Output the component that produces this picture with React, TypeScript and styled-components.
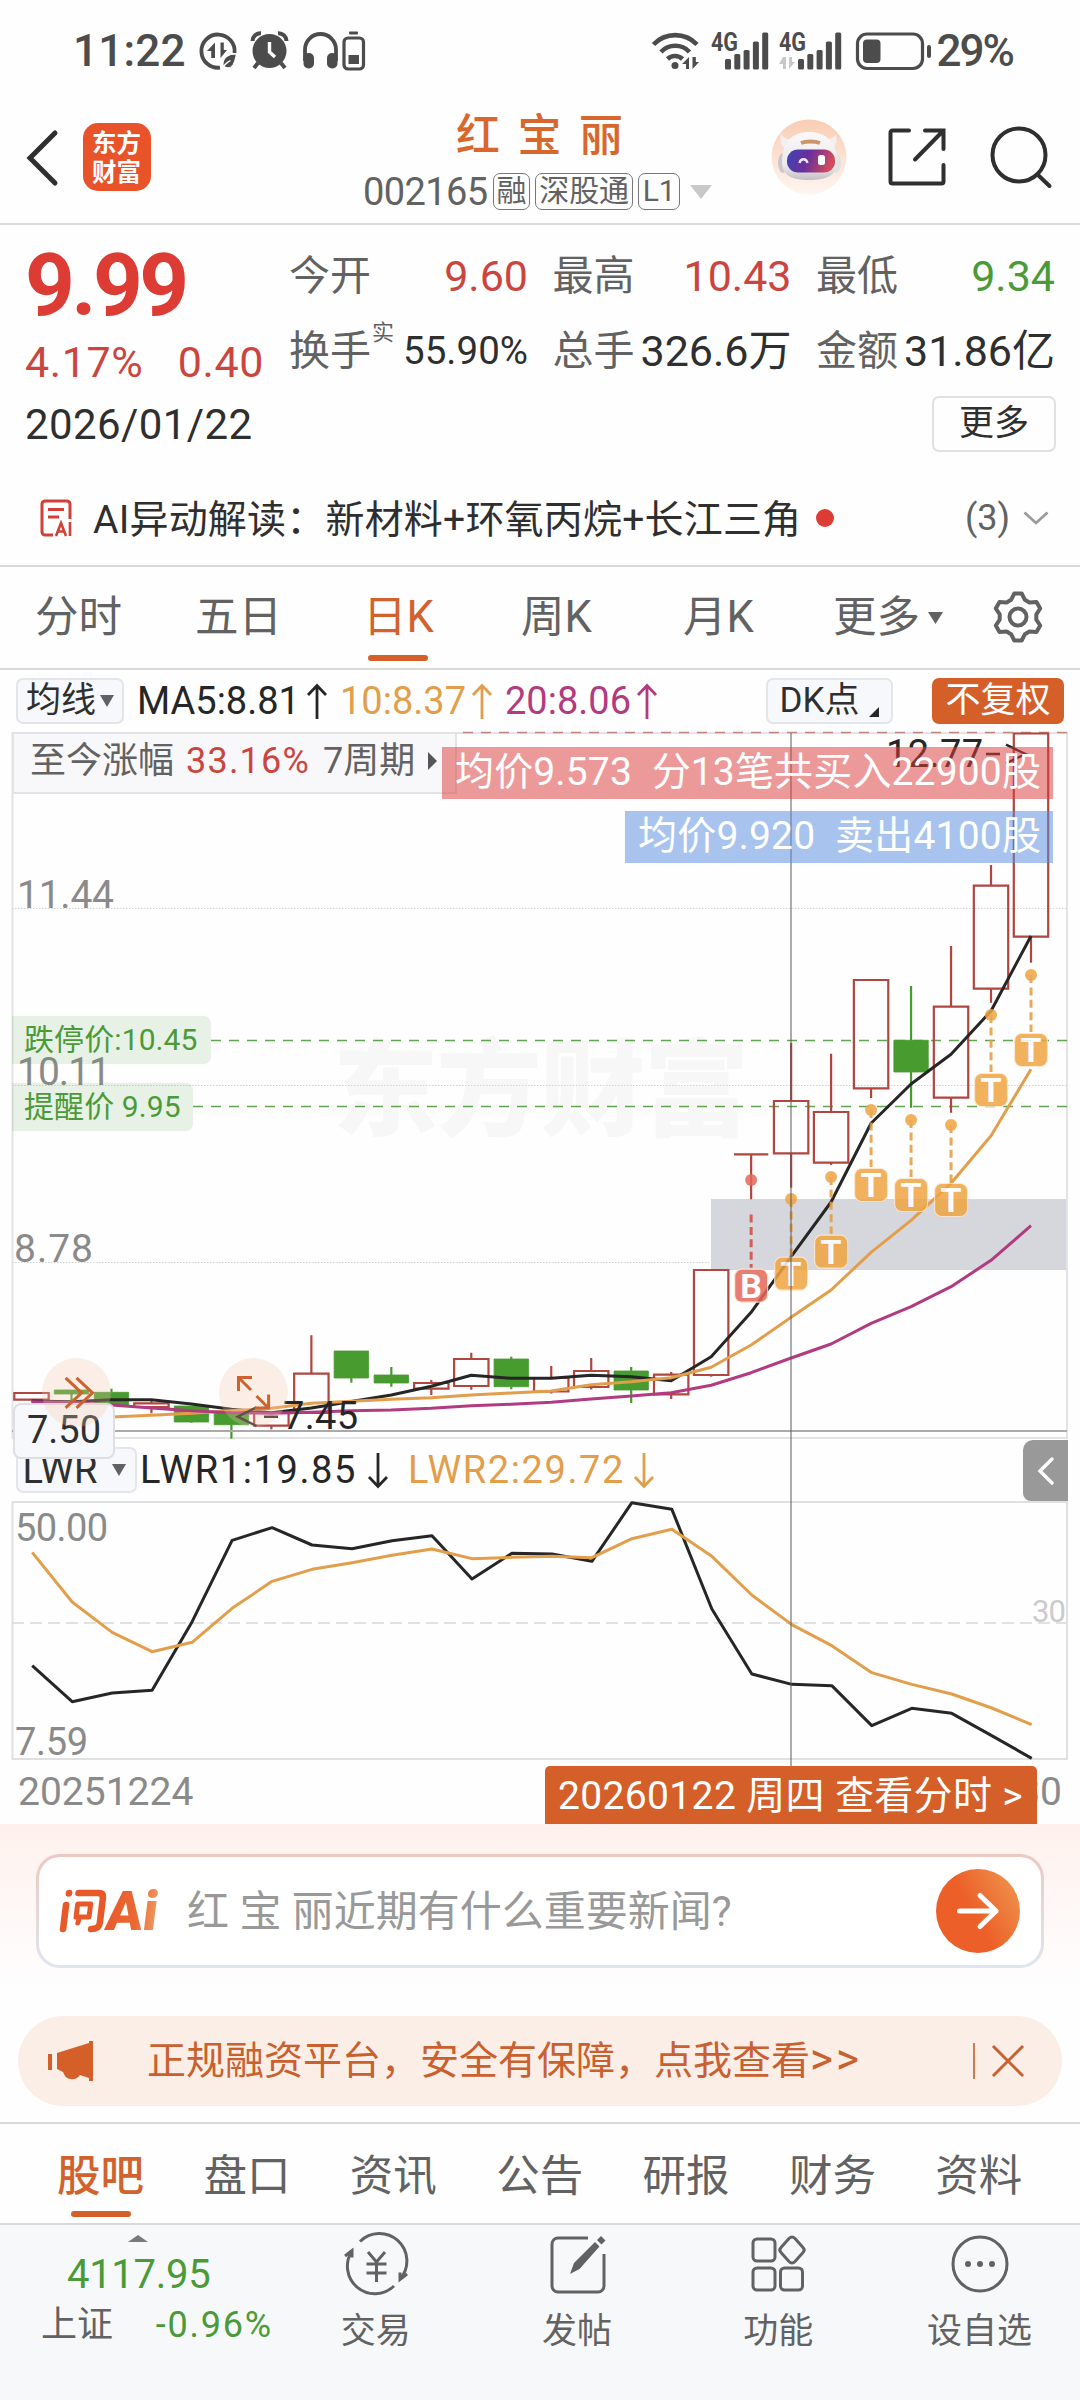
import React from 'react';
import styled, { createGlobalStyle } from 'styled-components';

const FONT = 'Roboto, "Noto Sans CJK SC", sans-serif';

const color = {
  orange: '#d55f29',
  red: '#cb453e',
  green: '#4b9a38',
  text: '#2f2f2f',
  sub: '#626262',
  axis: '#8a8a8a',
  line: '#d9d9d9',
  ma10: '#e39e4b',
  ma20: '#b23a80',
  status: '#4c4c4c'
};

const GlobalStyle = createGlobalStyle`
  * {
    box-sizing: border-box;
  }

  body {
    margin: 0;
    background: #fefefe;
    font-family: ${FONT};
    color: ${color.text};
  }
`;

const Page = styled.div`
  width: 1080px;
  height: 2400px;
  overflow: hidden;
  white-space: pre;
`;

const Icon = styled.svg<{ $left?: number; $top?: number; $flip?: boolean }>`
  display: block;
  flex: none;
  margin-left: ${p => p.$left || 0}px;
  margin-top: ${p => p.$top || 0}px;
  overflow: visible;
  transform: ${p => (p.$flip ? 'rotate(180deg)' : 'none')};
`;

const Grow = styled.div`
  flex: 1;
`;

/* ---------- status bar ---------- */

const StatusBar = styled.div`
  display: flex;
  align-items: center;
  height: 102px;
  padding: 0 67px 0 73px;
  color: ${color.status};
`;

const StatusText = styled.span<{ $ls?: number; $left?: number }>`
  margin-left: ${p => p.$left || 0}px;
  font-size: 44px;
  font-weight: 500;
  line-height: 50px;
  letter-spacing: ${p => p.$ls || 0}px;
`;

const StatusGroup = styled.div<{ $gap: number }>`
  display: flex;
  align-items: center;
  gap: ${p => p.$gap}px;
`;

const Signal = ({ arrows }: { arrows?: boolean }) => (
  <Icon width='58' height='38' viewBox='0 0 58 38'>
    <text x='0' y='19' fontSize='26' fontWeight='700' fill={color.status} textLength='27' lengthAdjust='spacingAndGlyphs'>4G</text>
    {[[14, 27], [23.3, 22], [32.6, 18], [41.9, 9.5], [51.2, 0.5]].map(([x, y]) => (
      <rect key={x} x={x + (arrows ? 5 : 0)} y={y} width='6' height={37.5 - y} rx='1.5' fill={color.status} />
    ))}
    {arrows && <path d='M4 25v12h3V25zM0 32l4-7v7zM10 25v12l6-7h-3v-5z' fill='#c8c8c8' />}
  </Icon>
);

const Status = () => (
  <StatusBar>
    <StatusText $ls={0.2}>11:22</StatusText>
    <StatusGroup $gap={14.5}>
      <Icon $left={13} width='38' height='38' viewBox='0 0 38 38'>
        <path d='M35.5 21A16.6 16.6 0 1 0 21 35.6' fill='none' stroke={color.status} strokeWidth='3.8' />
        <path d='M16 10.5V26h-3.8v-7H8zM21.5 10.5V26l6.500-8h-3.200v-7.500z' fill={color.status} />
        <path d='M37.5 22c-8 0-14 3-13.500 11.500 3 3.500 7.500 3 10-.5 2-3 2.500-6.500 3.500-11zM23.5 36c2-4 5-6 8-7.500' fill={color.status} stroke='#fefefe' strokeWidth='1.2' />
      </Icon>
      <Icon width='37' height='38' viewBox='0 0 37 38'>
        <path d='M1.5 9A8 8 0 0 1 10 1.2M35.5 9A8 8 0 0 0 27 1.2' fill='none' stroke={color.status} strokeWidth='4' />
        <path d='M7 31l-4 5M30 31l4 5' stroke={color.status} strokeWidth='4' />
        <circle cx='18.5' cy='19' r='17' fill={color.status} />
        <path d='M18.5 10v10l5.500 5' fill='none' stroke='#fefefe' strokeWidth='3.4' />
      </Icon>
      <Icon width='35' height='38' viewBox='0 0 35 38'>
        <path d='M2 29V17.500a15.500 15.500 0 0 1 31 0V29' fill='none' stroke={color.status} strokeWidth='3.8' />
        <rect x='0.5' y='21' width='10.5' height='15.5' rx='5' fill={color.status} />
        <rect x='24' y='21' width='10.5' height='15.5' rx='5' fill={color.status} />
      </Icon>
      <Icon $left={-10} width='23' height='40' viewBox='0 0 23 40'>
        <rect x='7' y='0.5' width='9' height='3' rx='1' fill={color.status} />
        <rect x='2' y='7' width='19.5' height='31' rx='4' fill='none' stroke={color.status} strokeWidth='3.2' />
        <rect x='6.5' y='24' width='10.5' height='9' fill={color.status} />
      </Icon>
    </StatusGroup>
    <Grow />
    <StatusGroup $gap={10.5}>
      <Icon width='48' height='38' viewBox='0 0 48 38'>
        <g fill='none' stroke={color.status} strokeWidth='4.6'>
          <path d='M1.5 12.500a30 30 0 0 1 43.500 0' />
          <path d='M9 20a19.500 19.500 0 0 1 28.500 0' />
          <path d='M15.5 27a11 11 0 0 1 15 0' />
        </g>
        <circle cx='23' cy='33.5' r='3.5' fill={color.status} />
        <path d='M37 25v12h-3v-5h-4zM40.5 25v12l6.500-7h-3.200v-5z' fill={color.status} />
      </Icon>
      <Signal />
      <Signal arrows />
      <Icon $left={8} width='76' height='38' viewBox='0 0 76 38'>
        <rect x='1.5' y='2' width='65' height='34.5' rx='9.5' fill='none' stroke={color.status} strokeWidth='3.2' />
        <rect x='7' y='7.5' width='17.5' height='23.5' rx='4' fill={color.status} />
        <rect x='71' y='13' width='4' height='13' rx='2' fill={color.status} />
      </Icon>
    </StatusGroup>
    <StatusText $left={5} $ls={-2}>29%</StatusText>
  </StatusBar>
);

/* ---------- header ---------- */

const HeaderBar = styled.div`
  display: flex;
  align-items: center;
  height: 123px;
  padding: 0 28px 0 26px;
  border-bottom: 2px solid ${color.line};
`;

const Lifted = styled.div`
  display: flex;
  align-items: center;
  height: 76px;
  margin-top: -12px;
`;

const Logo = styled.div`
  width: 68px;
  height: 68px;
  margin-left: 24px;
  padding: 4px 9px;
  border-radius: 15px;
  background: #e9532a;
  color: #fff;
  font-family: "Noto Sans CJK SC", sans-serif;
  font-size: 24.5px;
  font-weight: 700;
  line-height: 29px;
  white-space: pre-line;
`;

const TitleBlock = styled.div`
  flex: 1;
  margin-top: -2px;
  padding-left: 212px;
`;

const Title = styled.div`
  padding-left: 93px;
  font-size: 44px;
  line-height: 54px;
  font-weight: 500;
  letter-spacing: 3.3px;
  color: #d8672e;
`;

const CodeLine = styled.div`
  display: flex;
  align-items: center;
  height: 46px;
  margin-top: 6px;
  color: ${color.sub};
  font-size: 38px;
  line-height: 38px;
  letter-spacing: -0.6px;
`;

const CodeTag = styled.span<{ $pad?: number }>`
  height: 37px;
  margin-left: 5px;
  padding: 0 ${p => p.$pad || 3}px;
  border: 1.5px solid #777;
  border-radius: 7px;
  font-size: 30px;
  line-height: 34px;
  letter-spacing: -0.2px;
`;

const Header = () => (
  <HeaderBar>
    <Lifted>
      <Icon $top={2} width='33' height='56' viewBox='0 0 33 56'>
        <path d='M29 3L4 28l25 25' fill='none' stroke={color.text} strokeWidth='5' strokeLinecap='round' />
      </Icon>
      <Logo>{'东方\n财富'}</Logo>
    </Lifted>
    <TitleBlock>
      <Title>红 宝 丽</Title>
      <CodeLine>
        002165
        <CodeTag>融</CodeTag>
        <CodeTag>深股通</CodeTag>
        <CodeTag $pad={4}>L1</CodeTag>
        <Icon $left={10} width='22' height='14' viewBox='0 0 22 14'>
          <path d='M0 0h22L11 14z' fill='#c9c9c9' />
        </Icon>
      </CodeLine>
    </TitleBlock>
    <Lifted>
      <Icon width='76' height='76' viewBox='0 0 76 76'>
        <defs>
          <linearGradient id='halo' x1='0' y1='0' x2='0' y2='1'>
            <stop offset='0' stopColor='#f9cdb3' />
            <stop offset='1' stopColor='#fef6f2' />
          </linearGradient>
          <linearGradient id='shell' x1='0' y1='0' x2='0' y2='1'>
            <stop offset='0' stopColor='#fbf8f8' />
            <stop offset='0.7' stopColor='#ece9ec' />
            <stop offset='1' stopColor='#c3bfc5' />
          </linearGradient>
          <linearGradient id='visor' x1='0' y1='0' x2='1' y2='0.2'>
            <stop offset='0' stopColor='#3d45b4' />
            <stop offset='0.5' stopColor='#6c2f9b' />
            <stop offset='1' stopColor='#d24a5c' />
          </linearGradient>
        </defs>
        <circle cx='38' cy='38' r='37.5' fill='url(#halo)' />
        <path d='M10 15c-2 8 1 13 5 16l8-11c-6 1-11-1-13-5zM65 15c2 8-1 13-5 16l-8-11c6 1 11-1 13-5z' fill='#f3eeef' />
        <ellipse cx='12' cy='44' rx='5' ry='10' fill='#cbc7cc' />
        <ellipse cx='65' cy='44' rx='5' ry='10' fill='#e4dfe2' />
        <path d='M11 43c0-20 10-30 27-30s28 10 28 30c0 13-10 18-28 18S11 56 11 43z' fill='url(#shell)' />
        <path d='M30 24c5-2 14-2 19 0' stroke='#c9956a' strokeWidth='4' fill='none' />
        <rect x='16' y='30.5' width='48' height='23' rx='11' fill='url(#visor)' />
        <path d='M28.5 44c1-5 7-5 8 0' stroke='#e9e6ff' strokeWidth='2.4' fill='none' />
        <rect x='47' y='36' width='7' height='10' rx='2.5' fill='#fff' />
      </Icon>
      <Icon $left={41} width='58' height='58' viewBox='0 0 58 58' fill='none' stroke={color.text} strokeWidth='4' strokeLinecap='round'>
        <path d='M21 2.500H4.500a2 2 0 0 0-2 2v49a2 2 0 0 0 2 2h49a2 2 0 0 0 2-2V37' />
        <path d='M37 2.500h18.500V21M54 4L27 31.500' />
      </Icon>
      <Icon $left={44} width='62' height='60' viewBox='0 0 62 60' fill='none' stroke={color.text} strokeWidth='4' strokeLinecap='round'>
        <circle cx='29' cy='28' r='26.5' />
        <path d='M47.5 47.500l12 11.500' />
      </Icon>
    </Lifted>
  </HeaderBar>
);

/* ---------- quote ---------- */

const QuoteGrid = styled.div`
  display: grid;
  grid-template-columns: 264px 1fr;
  padding: 24px 24px 0 25px;
`;

const Price = styled.div`
  font-size: 87px;
  line-height: 73px;
  font-weight: 700;
  letter-spacing: -3.6px;
  color: #dc3c34;
`;

const Change = styled.div`
  display: flex;
  justify-content: space-between;
  width: 239px;
  margin-top: 15px;
  font-size: 43px;
  line-height: 50px;
  letter-spacing: 0.6px;
  color: ${color.red};
`;

const Stats = styled.div`
  display: grid;
  grid-template-columns: 239px 239px 239px;
  align-content: start;
  column-gap: 24.5px;
  row-gap: 25px;
  padding-top: 2px;
`;

const Stat = styled.div`
  display: flex;
  justify-content: space-between;
  height: 50px;
  line-height: 50px;
`;

const StatLabel = styled.span`
  display: flex;
  font-size: 41px;
  color: ${color.sub};
`;

const StatNote = styled.span`
  margin-left: 1px;
  font-size: 22px;
  line-height: 14px;
`;

const StatValue = styled.span<{ $color?: string; $small?: boolean }>`
  font-size: ${p => (p.$small ? 38.5 : 43)}px;
  color: ${p => p.$color || color.text};
`;

const DateRow = styled.div`
  display: flex;
  align-items: center;
  justify-content: space-between;
  height: 56px;
  margin-top: 9px;
  padding: 0 24px 0 25px;
  font-size: 42px;
  letter-spacing: 0.4px;
`;

const MoreButton = styled.div`
  width: 124px;
  height: 56px;
  border: 2px solid #e1e1e1;
  border-radius: 7px;
  font-size: 35px;
  line-height: 52px;
  letter-spacing: 0;
  text-align: center;
`;

const AiRow = styled.div`
  display: flex;
  align-items: center;
  height: 91px;
  margin-top: 20px;
  margin-bottom: 2px;
  padding: 0 31px 0 40px;
  font-size: 39px;
`;

const AiText = styled.span`
  margin-left: 21px;
  margin-top: -4px;
  letter-spacing: 0.2px;
`;

const RedDot = styled.i`
  width: 18px;
  height: 18px;
  margin-left: 15px;
  border-radius: 50%;
  background: #dc3c34;
`;

const AiCount = styled.span`
  margin-right: 13px;
  font-size: 36px;
  color: ${color.sub};
`;

const Quote = () => (
  <>
    <QuoteGrid>
      <div>
        <Price>9.99</Price>
        <Change>
          <span>4.17%</span>
          <span>0.40</span>
        </Change>
      </div>
      <Stats>
        <Stat><StatLabel>今开</StatLabel><StatValue $color={color.red}>9.60</StatValue></Stat>
        <Stat><StatLabel>最高</StatLabel><StatValue $color={color.red}>10.43</StatValue></Stat>
        <Stat><StatLabel>最低</StatLabel><StatValue $color={color.green}>9.34</StatValue></Stat>
        <Stat><StatLabel>换手<StatNote>实</StatNote></StatLabel><StatValue $small>55.90%</StatValue></Stat>
        <Stat><StatLabel>总手</StatLabel><StatValue>326.6万</StatValue></Stat>
        <Stat><StatLabel>金额</StatLabel><StatValue>31.86亿</StatValue></Stat>
      </Stats>
    </QuoteGrid>
    <DateRow>
      2026/01/22
      <MoreButton>更多</MoreButton>
    </DateRow>
    <AiRow>
      <Icon width='32' height='38' viewBox='0 0 32 38' fill='none' stroke='#cf4038' strokeWidth='3'>
        <path d='M13 36H5a3 3 0 0 1-3-3V5a3 3 0 0 1 3-3h22a3 3 0 0 1 3 3v15' />
        <path d='M8 10.500h16M8 18h11' />
        <path d='M16 37l5-13 5 13M18 32.500h6M30 23v14' strokeWidth='2.6' />
      </Icon>
      <AiText>AI异动解读：新材料+环氧丙烷+长江三角</AiText>
      <RedDot />
      <Grow />
      <AiCount>(3)</AiCount>
      <Icon width='26' height='14' viewBox='0 0 26 14'>
        <path d='M1.5 1.500L13 12 24.500 1.500' fill='none' stroke='#999' strokeWidth='2.6' />
      </Icon>
    </AiRow>
  </>
);

/* ---------- period tabs ---------- */

const PeriodBar = styled.div`
  display: grid;
  grid-template-columns: 160px 172px 154px 162px 150px 160px 1fr;
  align-items: center;
  height: 105px;
  padding-left: 35px;
  border-top: 2px solid ${color.line};
  border-bottom: 2px solid ${color.line};
`;

const Period = styled.div<{ $active?: boolean }>`
  position: relative;
  display: flex;
  align-items: center;
  font-size: 43.5px;
  line-height: 52px;
  text-indent: ${p => (p.$active ? -4 : 0)}px;
  color: ${p => (p.$active ? '#d2622d' : color.sub)};

  &::after {
    content: '';
    display: ${p => (p.$active ? 'block' : 'none')};
    position: absolute;
    left: 1px;
    bottom: -17px;
    width: 60px;
    height: 6px;
    border-radius: 3px;
    background: ${color.orange};
  }
`;

const Caret = ({ w = 14, h = 12, left = 0 }) => (
  <Icon $left={left} width={w} height={h} viewBox='0 0 14 12' preserveAspectRatio='none'>
    <path d='M0 0h14L7 12z' fill={color.sub} />
  </Icon>
);

const gearPath = () => {
  const pts: string[] = [];
  for (let i = 0; i < 6; i++) {
    const a = i * 60 - 90;
    [[-22, 18.5], [-9, 23.8], [9, 23.8], [22, 18.5]].forEach(([d, r]) => {
      const t = ((a + d) * Math.PI) / 180;
      pts.push(`${(26 + r * Math.cos(t)).toFixed(1)} ${(26 + r * Math.sin(t)).toFixed(1)}`);
    });
  }
  return `M${pts.join('L')}Z`;
};

const Periods = () => (
  <PeriodBar>
    <Period>分时</Period>
    <Period>五日</Period>
    <Period $active>日K</Period>
    <Period>周K</Period>
    <Period>月K</Period>
    <Period>更多<Caret w={15} left={8} /></Period>
    <Icon $left={-1} $top={-2} width='52' height='52' viewBox='0 0 52 52' fill='none' stroke={color.sub} strokeWidth='4' strokeLinejoin='round'>
      <path d={gearPath()} />
      <circle cx='26' cy='26' r='8.5' />
    </Icon>
  </PeriodBar>
);

/* ---------- indicator rows ---------- */

const IndicatorBar = styled.div<{ $h: number; $ls?: number }>`
  display: flex;
  align-items: center;
  height: ${p => p.$h}px;
  padding: 0 16px 0 16px;
  font-size: 38px;
  line-height: 44px;
  letter-spacing: ${p => p.$ls || 0}px;
`;

const Pill = styled.div<{ $w: number; $left?: number; $solid?: boolean }>`
  display: flex;
  align-items: center;
  justify-content: center;
  width: ${p => p.$w}px;
  height: 46px;
  margin-left: ${p => p.$left || 0}px;
  border: 2px solid ${p => (p.$solid ? color.orange : '#e3e5e9')};
  border-radius: 7px;
  background: ${p => (p.$solid ? color.orange : '#f7f8fb')};
  color: ${p => (p.$solid ? '#fff' : color.text)};
  font-size: 35px;
  line-height: 40px;
  letter-spacing: 0;
`;

const PillName = styled.span`
  margin: 0 15px 0 -4px;
  font-size: 38px;
`;

const Reading = styled.span<{ $color?: string; $left: number; $w: number }>`
  width: ${p => p.$w}px;
  margin-left: ${p => p.$left}px;
  color: ${p => p.$color || '#262626'};
`;

const Arrow = ({ c = '#262626', down = false }) => (
  <Icon $flip={down} width='20' height='35' viewBox='0 0 20 35'>
    <path d='M10 35V2M1 11l9-9.500 9 9.500' fill='none' stroke={c} strokeWidth='2.8' />
  </Icon>
);

/* ---------- chart ---------- */

// [body top, body bottom, high, low, rising]
type Candle = [number, number, number, number, boolean];

const candles: Candle[] = [
  [1393, 1399.7, 1393, 1399.7, true],
  [1390, 1394, 1390, 1400, false],
  [1392.3, 1405.3, 1388.7, 1405.3, false],
  [1403.3, 1407, 1400.7, 1413.3, true],
  [1406, 1422, 1406, 1422.7, false],
  [1413, 1424.7, 1413, 1438.7, false],
  [1413, 1425.7, 1413, 1429.3, true],
  [1373.7, 1413, 1335.3, 1414, true],
  [1351, 1378, 1351, 1382.7, false],
  [1375, 1383, 1367, 1386.7, false],
  [1383, 1388.7, 1380, 1395, true],
  [1359, 1386, 1352.7, 1389.7, true],
  [1359, 1386.7, 1356.7, 1389.3, false],
  [1378, 1391.5, 1366, 1393.5, true],
  [1371, 1387, 1358, 1389.5, true],
  [1371, 1390, 1367, 1403, false],
  [1374.7, 1394.3, 1372, 1399, true],
  [1270, 1375, 1270, 1376.7, true],
  [1154.3, 1154.3, 1154.3, 1199.3, true],
  [1101, 1153.3, 1043, 1187.7, true],
  [1112, 1162.7, 1053.7, 1165, true],
  [980, 1088.3, 980, 1098, true],
  [1040.3, 1072, 986, 1107.7, false],
  [1006.7, 1097.7, 946, 1112.7, true],
  [885.7, 988.7, 865, 1002.7, true],
  [733.5, 936.7, 733.5, 962.7, true]
];

const ma5 = [1401, 1401.7, 1399.7, 1399.7, 1404, 1409.3, 1412.7, 1408, 1401.5, 1395, 1386.3, 1375.3, 1378.3, 1378.3, 1375.3, 1376.7, 1380.7, 1356.7, 1312.3, 1256.7, 1202, 1123.3, 1084, 1054.3, 1011, 936];
const ma10 = [1419, 1418, 1417, 1415.3, 1413.3, 1410.7, 1408.3, 1403.3, 1401.3, 1399.3, 1397.7, 1395, 1393, 1391, 1384.7, 1381.7, 1377.7, 1367.3, 1345, 1317.3, 1290, 1252.3, 1220.3, 1183.3, 1135.7, 1069.3];
const ma20 = [1401.7, 1402.5, 1405, 1408, 1410.7, 1412.7, 1413.3, 1412.3, 1410.7, 1410, 1408.3, 1405.7, 1404.3, 1402.3, 1399, 1396, 1392.7, 1385.3, 1372.7, 1358, 1344, 1323.3, 1306.7, 1286.7, 1260.3, 1225.7];

const lwr1 = [737, 845, 819, 811, 605, 361, 323, 375, 386, 362, 347, 477, 400, 402, 424, 248, 268, 567, 762, 793, 797, 917, 865, 880, 947, 1015];
const lwr2 = [397, 546, 637, 695, 667, 565, 484, 448, 428, 406, 387, 416, 412, 409, 413, 356, 328, 409, 525, 614, 677, 758, 793, 822, 864, 914];

const marks = [
  { i: 18, dot: 1180, y: 1285.7, label: 'B' },
  { i: 19, dot: 1199, y: 1273.7, label: 'T' },
  { i: 20, dot: 1177, y: 1251.7, label: 'T' },
  { i: 21, dot: 1110, y: 1185, label: 'T' },
  { i: 22, dot: 1120, y: 1195, label: 'T' },
  { i: 23, dot: 1125, y: 1200, label: 'T' },
  { i: 24, dot: 1015, y: 1090, label: 'T' },
  { i: 25, dot: 975, y: 1050, label: 'T' }
];

const xAt = (i: number) => 31.5 + i * 39.98;
const points = (ys: number[]) => ys.map((y, i) => `${xAt(i)},${y}`).join(' ');

const ChartStack = styled.div`
  position: relative;
`;

const Crosshair = styled.i`
  position: absolute;
  left: 790px;
  top: 1px;
  width: 2px;
  height: 1033px;
  background: rgba(90, 90, 90, 0.5);
`;

const Overlay = styled.div<{ $x: number; $y: number; $w: number; $h: number }>`
  position: absolute;
  left: ${p => p.$x}px;
  top: ${p => p.$y}px;
  width: ${p => p.$w}px;
  height: ${p => p.$h}px;
`;

const RangeInfo = styled(Overlay)`
  display: flex;
  align-items: center;
  padding: 0 16px 4px;
  border: 2px solid #e3e3e6;
  background: #f8f8fb;
  font-size: 36px;
  line-height: 50px;
  color: ${color.sub};
`;

const RangeValue = styled.span`
  margin: 0 13px 0 12px;
  letter-spacing: 1.2px;
  color: ${color.red};
`;

const Banner = styled(Overlay)<{ $sell?: boolean }>`
  padding-left: 13px;
  background: ${p => (p.$sell ? 'rgba(88, 142, 222, 0.52)' : 'rgba(219, 62, 60, 0.52)')};
  color: #fff;
  font-size: 39px;
  line-height: 51px;
  letter-spacing: ${p => (p.$sell ? 0.2 : 0.15)}px;
`;

const PriceTag = styled(Overlay)`
  padding-left: 12px;
  border-radius: 0 7px 7px 0;
  background: rgba(77, 154, 58, 0.13);
  color: ${color.green};
  font-size: 30px;
  line-height: 47px;
  letter-spacing: 0.1px;
`;

const CrossPrice = styled(Overlay)`
  border: 2px solid #dddfe4;
  border-radius: 8px;
  background: #f7f8fb;
  font-size: 38px;
  line-height: 51px;
  text-align: center;
`;

const FloatButton = styled(Overlay)`
  border-radius: 50%;
  background: rgba(244, 196, 168, 0.28);
`;

const Collapse = styled(Overlay)`
  display: flex;
  align-items: center;
  justify-content: center;
  border-radius: 10px 0 0 8px;
  background: #999;
`;

const Axis = styled.div`
  display: flex;
  justify-content: space-between;
  align-items: center;
  height: 64px;
  padding: 0 18px;
  font-size: 39px;
  color: ${color.axis};
`;

const DateTag = styled(Overlay)`
  padding-left: 13px;
  border-radius: 5px 5px 0 0;
  background: ${color.orange};
  color: #fff;
  font-size: 39px;
  line-height: 61px;
  letter-spacing: 0.35px;
`;

interface AxisLabelProps {
  x: number;
  y: number;
  w: number;
  size?: number;
  fill?: string;
  children: string;
}

const AxisLabel = ({ x, y, w, size = 39, fill = color.axis, children }: AxisLabelProps) => (
  <text x={x} y={y} fontSize={size} fill={fill} textLength={w}>{children}</text>
);

const KLine = () => (
  <Icon width='1080' height='706' viewBox='0 732 1080 706'>
    <text x='333' y='1127' fontSize='105' fontWeight='900' fill='#f7f7f7' fontFamily='"Noto Sans CJK SC"' textLength='416'>东方财富</text>
    <rect x='711' y='1199' width='356' height='71' fill='#d6d7dc' />
    <path d='M12.5 733H1067V1438H12.500Z' fill='none' stroke='#e3e3e5' strokeWidth='2' />
    <path d='M12 908.500H1067M12 1085.500H1067M12 1262.500H711' stroke='#d2d2d2' strokeDasharray='1.5 1.5' />
    <path d='M463 732.500H1067' stroke='#c4857f' strokeWidth='1.5' strokeDasharray='10 8' />
    <path d='M211 1040.500H1067M193 1106.500H1067' stroke='#5fa552' strokeWidth='1.6' strokeDasharray='10 8' />
    <AxisLabel x={17} y={908} w={97}>11.44</AxisLabel>
    <AxisLabel x={17} y={1085} w={94}>10.11</AxisLabel>
    <AxisLabel x={14} y={1261.5} w={79}>8.78</AxisLabel>
    {candles.map(([top, bottom, high, low, up], i) => {
      const x = xAt(i);
      const c = up ? '#b04640' : '#479b2f';
      return (
        <g key={i} stroke={c} strokeWidth='2.2'>
          <path d={`M${x} ${high}V${top}M${x} ${bottom}V${low}`} />
          <path d={`M${x - 17.2} ${top}h34.400v${bottom - top}h-34.400Z`} fill={up ? 'none' : c} strokeWidth={up ? 2.2 : 0.8} />
        </g>
      );
    })}
    <g fill='none' strokeWidth='3' strokeLinejoin='round'>
      <polyline points={points(ma5)} stroke='#262626' />
      <polyline points={points(ma10)} stroke={color.ma10} />
      <polyline points={points(ma20)} stroke={color.ma20} />
    </g>
    <path d='M12 1431H1067' stroke='#aaa' strokeWidth='2' />
    {marks.map(({ i, dot, y, label }) => {
      const buy = label === 'B';
      const c = buy ? '#e5685a' : '#f0a440';
      const x = xAt(i);
      return (
        <g key={i} opacity='0.85'>
          <circle cx={x} cy={dot} r='6' fill={c} />
          <path d={`M${x} ${buy ? 1214.5 : dot}V${y - 18}`} stroke={buy ? '#cf4c40' : '#e59c3e'} strokeWidth='3' strokeDasharray='8 4.4' />
          <rect x={x - 16.5} y={y - 16.5} width='33' height='33' rx='7' fill={c} stroke='#fbe6cd' strokeWidth='1.2' />
          <text x={x} y={y + 12} fontSize='34' fontWeight='700' fill='#fff' textAnchor='middle'>{label}</text>
        </g>
      );
    })}
    <g fill='none' stroke='#262626' strokeWidth='2.4'>
      <path d='M1006 744.700L1025.500 754 1006 763.300M986 754h14' />
      <path d='M256.5 1407.300L237.600 1416.700 256.500 1426M264 1416.700h14' />
    </g>
    <AxisLabel x={886} y={767} w={97} size={38} fill='#262626'>12.77</AxisLabel>
    <AxisLabel x={283} y={1429} w={75} size={38} fill='#262626'>7.45</AxisLabel>
  </Icon>
);

const LwrPane = () => {
  const scale = (ys: number[]) => ys.map(y => 1420 + y / 3);
  return (
    <Icon width='1080' height='258' viewBox='0 1502 1080 258'>
      <path d='M12.5 1502H1067V1759H12.500Z' fill='none' stroke='#e0e0e2' strokeWidth='2' />
      <path d='M12 1623H1067' stroke='#d8d8d8' strokeWidth='1.6' strokeDasharray='12 6' />
      <AxisLabel x={15} y={1541} w={93} size={38}>50.00</AxisLabel>
      <AxisLabel x={15} y={1754.5} w={73} size={38}>7.59</AxisLabel>
      <AxisLabel x={1032} y={1622} w={34} size={31} fill='#cbcbcb'>30</AxisLabel>
      <g fill='none' strokeWidth='3' strokeLinejoin='round' transform='translate(0.7 0)'>
        <polyline points={points(scale(lwr1))} stroke='#262626' />
        <polyline points={points(scale(lwr2))} stroke={color.ma10} />
      </g>
    </Icon>
  );
};

const Chart = () => (
  <>
    <IndicatorBar $h={62}>
      <Pill $w={108}>均线<Caret left={4} /></Pill>
      <Reading $left={13} $w={170}>MA5:8.81</Reading>
      <Arrow />
      <Reading $left={13} $w={132} $color={color.ma10}>10:8.37</Reading>
      <Arrow c={color.ma10} />
      <Reading $left={13} $w={132} $color={color.ma20}>20:8.06</Reading>
      <Arrow c={color.ma20} />
      <Grow />
      <Pill $w={127}>
        DK点
        <Icon $left={10} $top={22} width='10' height='10' viewBox='0 0 10 10'>
          <path d='M10 0v10H0z' fill='#262626' />
        </Icon>
      </Pill>
      <Pill $w={132} $left={39} $solid>不复权</Pill>
    </IndicatorBar>
    <ChartStack>
      <KLine />
      <IndicatorBar $h={64} $ls={1.6}>
        <Pill $w={121}>
          <PillName>LWR</PillName>
          <Caret />
        </Pill>
        <Reading $left={3} $w={228}>LWR1:19.85</Reading>
        <Arrow down />
        <Reading $left={20} $w={226} $color={color.ma10}>LWR2:29.72</Reading>
        <Arrow down c={color.ma10} />
      </IndicatorBar>
      <LwrPane />
      <Axis>
        <span>20251224</span>
        <span>20260130</span>
      </Axis>
      <Crosshair />
      <RangeInfo $x={12} $y={0} $w={445} $h={62}>
        至今涨幅
        <RangeValue>33.16%</RangeValue>
        7周期
        <Icon $left={13} width='9' height='18' viewBox='0 0 9 18'>
          <path d='M0 0l9 9-9 9z' fill='#555' />
        </Icon>
      </RangeInfo>
      <Banner $x={442} $y={15} $w={611} $h={52}>均价9.573  分13笔共买入22900股</Banner>
      <Banner $sell $x={625} $y={79} $w={428} $h={52}>均价9.920  卖出4100股</Banner>
      <PriceTag $x={12} $y={284} $w={199} $h={48}>跌停价:10.45</PriceTag>
      <PriceTag $x={12} $y={351} $w={181} $h={48}>提醒价 9.95</PriceTag>
      <CrossPrice $x={13} $y={671} $w={102} $h={56}>7.50</CrossPrice>
      <FloatButton $x={42} $y={625.5} $w={69} $h={69}>
        <Icon width='69' height='69' viewBox='42 1357.5 69 69' fill='none' stroke='#cd622f' strokeWidth='3'>
          <path d='M65.6 1377.300l16 15-16 15M76.5 1377.300l16 15-16 15' />
        </Icon>
      </FloatButton>
      <FloatButton $x={219} $y={625.5} $w={69} $h={69}>
        <Icon width='69' height='69' viewBox='219 1357.5 69 69' fill='none' stroke='#cd622f' strokeWidth='3'>
          <path d='M252 1377h-13.500v13.500M239 1377.500l12 12M268.6 1394v13.500h-13.800M256.5 1395.500l11.500 11.500' />
        </Icon>
      </FloatButton>
      <Collapse $x={1023} $y={708} $w={45} $h={61}>
        <Icon width='16' height='28' viewBox='0 0 16 28'>
          <path d='M14 2L2 14l12 12' fill='none' stroke='#fff' strokeWidth='3.4' strokeLinecap='round' />
        </Icon>
      </Collapse>
      <DateTag $x={545} $y={1034} $w={492} $h={58}>20260122 周四 查看分时 &gt;</DateTag>
    </ChartStack>
  </>
);

/* ---------- ask AI and promo ---------- */

const AskWrap = styled.div`
  height: 192px;
  padding: 30px 36px 0;
  background: linear-gradient(#fef1ed, #fefefe 85%);
`;

const AskBox = styled.div`
  display: flex;
  align-items: center;
  height: 114px;
  padding: 0 21px 0 22px;
  border: 3px solid transparent;
  border-radius: 24px;
  background: linear-gradient(#fff, #fff) padding-box, linear-gradient(#edc8c2, #dfe6f0) border-box;
`;

const AskText = styled.span`
  flex: 1;
  margin-left: 28px;
  font-size: 42px;
  line-height: 50px;
  padding-top: 1px;
  color: #999;
`;

const SendButton = styled.div`
  display: flex;
  align-items: center;
  justify-content: center;
  width: 84px;
  height: 84px;
  border-radius: 50%;
  background: linear-gradient(60deg, #ec5f29 45%, #f09a52);
`;

const Promo = styled.div`
  display: flex;
  align-items: center;
  height: 90px;
  margin: 0 18px 16px;
  padding: 0 38px 0 30px;
  border-radius: 45px;
  background: #fbeee6;
  color: #c9602f;
  font-size: 39px;
`;

const PromoText = styled.span`
  flex: 1;
  margin: -8px 0 0 53px;
`;

const PromoMore = styled.span`
  font-size: 44px;
  letter-spacing: 3px;
`;

const Divider = styled.i`
  width: 2px;
  height: 36px;
  margin-right: 17px;
  background: #cf7c55;
`;

const Ask = () => (
  <>
    <AskWrap>
      <AskBox>
        <Icon width='98' height='44' viewBox='0 0 98 44'>
          <defs>
            <linearGradient id='ask' x1='0' y1='0' x2='1' y2='0'>
              <stop offset='0' stopColor='#e8592a' />
              <stop offset='0.6' stopColor='#ea6a34' />
              <stop offset='1' stopColor='#ef9a62' />
            </linearGradient>
          </defs>
          <g transform='skewX(-7)' fontWeight='900' fill='url(#ask)'>
            <g fill='none' stroke='#e8592a' strokeWidth='6.6' strokeLinecap='round' strokeLinejoin='round'>
              <path d='M7 16v24M8.5 4v0.500M18 4h20q5 0 5 5v25q0 6-8 6' />
              <path d='M18.5 15h13v13h-13zM22 28l-1 6' strokeWidth='5' />
            </g>
            <text x='48' y='41' fontSize='55' fontFamily='Roboto' textLength='52' lengthAdjust='spacingAndGlyphs'>Ai</text>
          </g>
        </Icon>
        <AskText>红 宝 丽近期有什么重要新闻?</AskText>
        <SendButton>
          <Icon width='42' height='36' viewBox='0 0 42 36'>
            <path d='M2.5 18H39M23 2.500L39 18 23 33.500' fill='none' stroke='#fff' strokeWidth='5' strokeLinecap='round' strokeLinejoin='round' />
          </Icon>
        </SendButton>
      </AskBox>
    </AskWrap>
    <Promo>
      <Icon width='46' height='40' viewBox='0 0 46 40' fill='#d55f29'>
        <path d='M0 13h4v16H0zM9 12L41 2V0h4v40h-4v-3l-9-3c-3 5-11 6-15 1l-2-4-6-3z' />
      </Icon>
      <PromoText>正规融资平台，安全有保障，点我查看<PromoMore>&gt;&gt;</PromoMore></PromoText>
      <Divider />
      <Icon width='32' height='32' viewBox='0 0 32 32'>
        <path d='M1 1l30 30M31 1L1 31' stroke='#c9602f' strokeWidth='3' />
      </Icon>
    </Promo>
  </>
);

/* ---------- bottom ---------- */

const SectionBar = styled.div`
  display: grid;
  grid-template-columns: repeat(7, 146.4px);
  align-items: center;
  height: 103px;
  padding: 7px 0 0 57px;
  border-top: 2px solid ${color.line};
  border-bottom: 2px solid ${color.line};
`;

const Section = styled(Period)`
  text-indent: 0;
  font-weight: ${p => (p.$active ? 500 : 400)};

  &::after {
    left: 14px;
    bottom: -14px;
  }
`;

const BottomNav = styled.div`
  display: grid;
  grid-template-columns: 275px repeat(4, 201.3px);
  height: 176px;
  background: #f6f8fa;
`;

const NavItem = styled.div`
  display: flex;
  flex-direction: column;
  align-items: center;
  gap: 16px;
  padding-top: 9px;
  font-size: 35px;
  line-height: 44px;
  color: ${color.sub};
`;

const IndexBox = styled.div`
  padding: 10px 2px 0 41px;
  line-height: 44px;
`;

const IndexValue = styled.div`
  margin: 11px 0 0 26px;
  font-size: 40px;
  letter-spacing: -0.3px;
  color: ${color.green};
`;

const IndexChange = styled.div`
  display: flex;
  justify-content: space-between;
  margin-top: 6px;
  font-size: 36px;
  color: ${color.sub};
`;

const IndexPercent = styled.span`
  letter-spacing: 1.8px;
  color: ${color.green};
`;

const sections = ['股吧', '盘口', '资讯', '公告', '研报', '财务', '资料'];

const navIcon = { width: 64, height: 60, viewBox: '0 0 64 60', fill: 'none', stroke: color.sub, strokeWidth: 3 };

const Bottom = () => (
  <>
    <SectionBar>
      {sections.map((name, i) => <Section key={name} $active={i === 0}>{name}</Section>)}
    </SectionBar>
    <BottomNav>
      <IndexBox>
        <Icon $left={87} width='20' height='7' viewBox='0 0 20 7'>
          <path d='M0 7L10 0l10 7z' fill='#7a7a7a' />
        </Icon>
        <IndexValue>4117.95</IndexValue>
        <IndexChange>上证<IndexPercent>-0.96%</IndexPercent></IndexChange>
      </IndexBox>
      <NavItem>
        <Icon {...navIcon}>
          <path d='M16 7.500A27.500 27.500 0 0 1 57 44M50 52A27.500 27.500 0 0 1 8 17' />
          <path d='M1 22l7-5.500v7M63 40l-7 5.500v-7' />
          <path d='M24 18l8.500 10L41 18M32.5 28v20M22.5 30h20M22.5 39h20' />
        </Icon>
        交易
      </NavItem>
      <NavItem>
        <Icon {...navIcon}>
          <path d='M43 4H13a6 6 0 0 0-6 6v42a6 6 0 0 0 6 6h40a6 6 0 0 0 6-6V20' />
          <path d='M25 40l4-11 21-21 4.500 4.500-20 22.500zM52 6l4-4 4.500 4.500-4 4z' fill={color.sub} stroke='none' />
        </Icon>
        发帖
      </NavItem>
      <NavItem>
        <Icon {...navIcon}>
          <rect x='7' y='5' width='22' height='22' rx='4' />
          <path d='M43 4.500q3-3 6 0l8 9q2.500 2.500 0 5l-8 9q-3 3-6 0l-8-9q-2.500-2.500 0-5z' />
          <rect x='7' y='34' width='22' height='22' rx='4' />
          <rect x='34.5' y='34' width='22' height='22' rx='4' />
        </Icon>
        功能
      </NavItem>
      <NavItem>
        <Icon {...navIcon}>
          <circle cx='32' cy='30' r='27' />
          <g fill={color.sub} stroke='none'>
            <circle cx='20' cy='30' r='3' />
            <circle cx='32' cy='30' r='3' />
            <circle cx='44' cy='30' r='3' />
          </g>
        </Icon>
        设自选
      </NavItem>
    </BottomNav>
  </>
);

export default function App (): React.ReactElement {
  return (
    <Page>
      <GlobalStyle />
      <Status />
      <Header />
      <Quote />
      <Periods />
      <Chart />
      <Ask />
      <Bottom />
    </Page>
  );
}
